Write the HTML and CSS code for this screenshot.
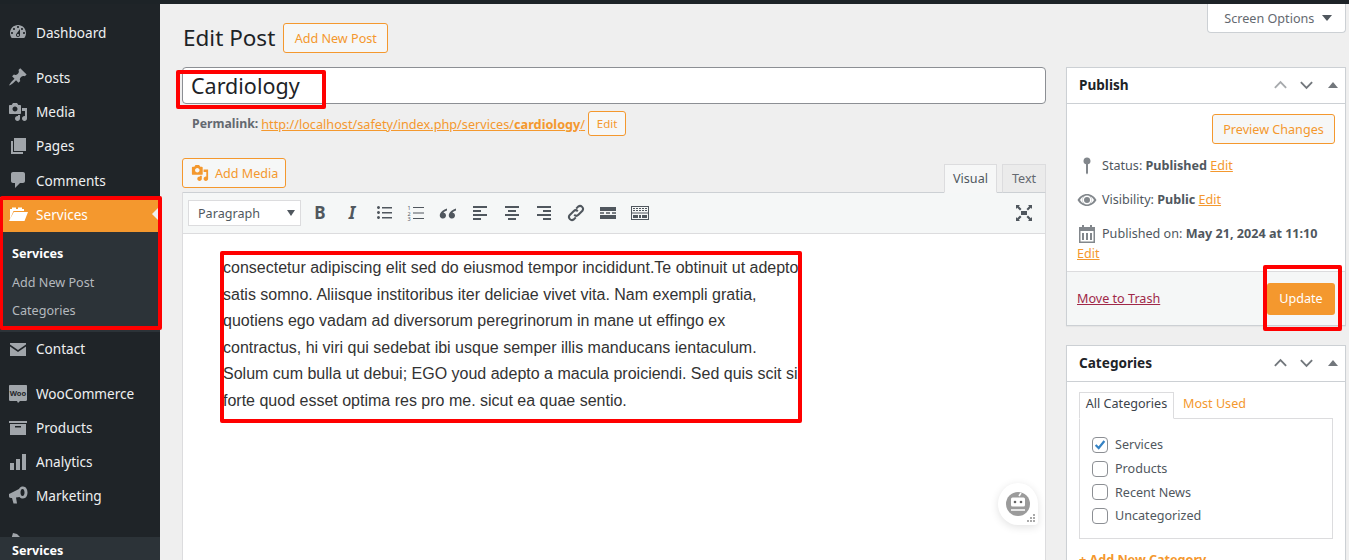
FILE: index.html
```html
<!DOCTYPE html>
<html lang="en">
<head>
<meta charset="utf-8">
<title>Edit Post</title>
<link rel="stylesheet" href="styles.css">
</head>
<body>
<div class="topbar"></div>
<div class="shell">
  <nav class="sidebar">
    <a class="item"><svg class="mi" viewBox="0 0 20 20"><path d="M3.76 16h12.48c1.1-1.37 1.76-3.11 1.76-5 0-4.42-3.58-8-8-8s-8 3.58-8 8c0 1.89.66 3.63 1.76 5zM10 4c.55 0 1 .45 1 1s-.45 1-1 1-1-.45-1-1 .45-1 1-1zM6 6c.55 0 1 .45 1 1s-.45 1-1 1-1-.45-1-1 .45-1 1-1zm8 0c.55 0 1 .45 1 1s-.45 1-1 1-1-.45-1-1 .45-1 1-1zm-5.37 5.55L12 7v6c0 1.1-.9 2-2 2s-2-.9-2-2c0-.57.24-1.08.63-1.45zM4 10c.55 0 1 .45 1 1s-.45 1-1 1-1-.45-1-1 .45-1 1-1zm12 0c.55 0 1 .45 1 1s-.45 1-1 1-1-.45-1-1 .45-1 1-1zm-5 3c0-.55-.45-1-1-1s-1 .45-1 1 .45 1 1 1 1-.45 1-1z" fill-rule="evenodd"/></svg>Dashboard</a>
    <div class="sep"></div>
    <a class="item"><svg class="mi" viewBox="0 0 20 20"><path d="M10.44 3.02l1.82-1.82 6.36 6.35-1.83 1.82c-1.05-.68-2.48-.57-3.41.36l-.75.75c-.92.93-1.04 2.35-.35 3.41l-1.83 1.82-2.41-2.41-2.8 2.79c-.42.42-3.38 2.71-3.8 2.29s1.86-3.39 2.28-3.81l2.79-2.79L4.1 9.36l1.83-1.82c1.05.69 2.48.57 3.4-.36l.75-.75c.93-.92 1.05-2.35.36-3.41z"/></svg>Posts</a>
    <a class="item"><svg class="mi" viewBox="0 0 20 20"><path d="M13 11V4c0-.55-.45-1-1-1h-1.67L9 1H5L3.67 3H2c-.55 0-1 .45-1 1v7c0 .55.45 1 1 1h10c.55 0 1-.45 1-1zM7 4.5c1.38 0 2.5 1.12 2.5 2.5S8.38 9.5 7 9.5 4.5 8.38 4.5 7 5.62 4.5 7 4.5zM14 6h5v10.5c0 1.38-1.12 2.5-2.5 2.5S14 17.88 14 16.5s1.12-2.5 2.5-2.5c.17 0 .34.02.5.05V9h-3V6zm-4 8.05V13h2v3.5c0 1.38-1.12 2.5-2.5 2.5S7 17.88 7 16.5 8.12 14 9.5 14c.17 0 .34.02.5.05z" fill-rule="evenodd"/></svg>Media</a>
    <a class="item"><svg class="mi" viewBox="0 0 20 20"><path d="M6 15V2h12v13H6zM3 5h2v11h10v2H3V5z"/></svg>Pages</a>
    <a class="item"><svg class="mi" viewBox="0 0 20 20"><path d="M5 2h10c1.1 0 2 .9 2 2v7c0 1.1-.9 2-2 2h-3l-5 5v-5H5c-1.1 0-2-.9-2-2V4c0-1.1.9-2 2-2z"/></svg>Comments</a>
    <a class="item active"><svg class="mi" viewBox="0 0 20 20"><path d="M2 5h2V3.500h4V5h2V3.500h4V5h2v2H5.500L2 15zM1 17L5.800 8H20l-3.500 9z"/></svg>Services</a>
    <div class="sub">
      <a class="sub-item current">Services</a>
      <a class="sub-item">Add New Post</a>
      <a class="sub-item">Categories</a>
    </div>
    <div class="lower">
      <a class="item"><svg class="mi" viewBox="0 0 20 20"><path d="M2 4h16v1.500l-8 5.500-8-5.500V4zm0 3.500l8 5.500 8-5.500V17H2V7.500z"/></svg>Contact</a>
      <div class="sep"></div>
      <a class="item"><svg class="mi woo" viewBox="0 0 20 20"><path d="M2 1h16c.8 0 1 .6 1 1.200v13.600c0 .7-.4 1.200-1 1.200h-6l-2 2-1-2H2c-.7 0-1-.5-1-1.200V2.200C1 1.600 1.300 1 2 1z"/><text x="10" y="11.500" class="woo-text">Woo</text></svg>WooCommerce</a>
      <a class="item"><svg class="mi" viewBox="0 0 20 20"><path d="M1 3h18v2H1V3zm1 3h16v11H2V6zm5 2v1.500h6V8H7z" fill-rule="evenodd"/></svg>Products</a>
      <a class="item"><svg class="mi" viewBox="0 0 20 20"><path d="M2 11h4v7H2v-7zm6-4h4v11H8V7zm6-5h4v16h-4V2z"/></svg>Analytics</a>
      <a class="item"><svg class="mi" viewBox="0 0 20 20"><path d="M1 8l10-5c1-2 2.500-2.500 4-2.500 3 0 4.500 3 4.500 6s-1.500 6-4.500 6c-1.500 0-2.500-.5-3.500-1.500L8 11.500l1 6H5.500L4 12H3c-1.500 0-2-1-2-2V8zm13.500-5c-1.500 0-2 2-2 3.500s.5 3.500 2 3.500 2-2 2-3.500-.5-3.500-2-3.500z" fill-rule="evenodd"/></svg>Marketing</a>
      <div class="sep"></div>
      <a class="item"><svg class="mi" viewBox="0 0 20 20"><path d="M5 2l4 1 8 8-6 6-8-8z"/></svg></a>
    </div>
    <div class="status-bar">Services</div>
  </nav>

  <main class="content">
    <button class="screen-options">Screen Options <span class="caret"></span></button>
    <header class="page-head">
      <h1>Edit Post</h1>
      <a class="btn add-new">Add New Post</a>
    </header>
    <div class="columns">
      <section class="left">
        <div class="title-input">Cardiology</div>
        <div class="permalink">
          <strong class="perma-label">Permalink:</strong>
          <a class="link">http://localhost/safety/index.php/services/<b>cardiology</b>/</a>
          <a class="btn small">Edit</a>
        </div>
        <div class="editor-top">
          <a class="btn media-btn"><svg class="bi" viewBox="0 0 20 20"><path d="M13 11V4c0-.55-.45-1-1-1h-1.670L9 1H5L3.670 3H2c-.55 0-1 .45-1 1v7c0 .55.45 1 1 1h10c.55 0 1-.45 1-1zM7 4.500c1.380 0 2.500 1.120 2.500 2.500S8.380 9.500 7 9.500 4.500 8.380 4.500 7 5.620 4.500 7 4.500zM14 6h5v10.500c0 1.380-1.120 2.500-2.500 2.500S14 17.880 14 16.500s1.120-2.500 2.500-2.500c.17 0 .34.020.5.050V9h-3V6zm-4 8.050V13h2v3.500c0 1.380-1.120 2.500-2.500 2.500S7 17.880 7 16.500 8.120 14 9.500 14c.17 0 .34.020.5.050z" fill-rule="evenodd"/></svg>Add Media</a>
          <div class="tabs">
            <span class="tab on">Visual</span>
            <span class="tab">Text</span>
          </div>
        </div>
        <div class="editor">
          <div class="toolbar">
            <div class="format">Paragraph<span class="format-caret"></span></div>
            <span class="tool tb">B</span>
            <span class="tool ti">I</span>
            <svg class="tool-svg" viewBox="0 0 20 20"><path d="M3 4.500a1.500 1.500 0 1 1 0 .01zM8 4h10v1.500H8zM3 9.500a1.500 1.500 0 1 1 0 .01zM8 9h10v1.500H8zM3 14.500a1.500 1.500 0 1 1 0 .01zM8 14h10v1.500H8z"/></svg>
            <svg class="tool-svg" viewBox="0 0 20 20"><path d="M7 4h11v1H7zM7 9.500h11v1H7zM7 15h11v1H7z"/><text x="1.500" y="7" class="num">1</text><text x="1.500" y="12.500" class="num">2</text><text x="1.500" y="18" class="num">3</text></svg>
            <svg class="tool-svg" viewBox="0 0 20 20"><path d="M9 5.500C5.500 6.500 3 8.500 2 11c-.6 1.800 0 4.500 3 4.500 2 0 3-1.500 3-3s-1-2.700-2.500-2.700c.5-1 1.800-1.900 3.500-2.300zM18 5.500c-3.500 1-6 3-7 5.500-.6 1.800 0 4.500 3 4.500 2 0 3-1.500 3-3s-1-2.700-2.500-2.700c.5-1 1.800-1.900 3.500-2.300z"/></svg>
            <svg class="tool-svg" viewBox="0 0 20 20"><path d="M3 3h14v2H3zM3 7h8v2H3zM3 11h14v2H3zM3 15h8v2H3z"/></svg>
            <svg class="tool-svg" viewBox="0 0 20 20"><path d="M3 3h14v2H3zM6 7h8v2H6zM3 11h14v2H3zM6 15h8v2H6z"/></svg>
            <svg class="tool-svg" viewBox="0 0 20 20"><path d="M3 3h14v2H3zM9 7h8v2H9zM3 11h14v2H3zM9 15h8v2H9z"/></svg>
            <svg class="tool-svg" viewBox="0 0 20 20"><path d="M11.800 8.200a3 3 0 0 0-4.200 0l-4 4a3 3 0 0 0 4.200 4.200l2-2M8.200 11.800a3 3 0 0 0 4.200 0l4-4a3 3 0 0 0-4.200-4.200l-2 2" class="stroke"/></svg>
            <svg class="tool-svg" viewBox="0 0 20 20"><path d="M2 4h16v4H2zM2 12h16v4H2zM2 9.300h4v1.400H2zM8 9.300h4v1.400H8zM14 9.300h4v1.400h-4z"/></svg>
            <svg class="tool-svg" viewBox="0 0 20 20"><path d="M1 3h18v14H1V3zm1 1v5.500h16V4H2zm0 6.500V16h16v-5.500H2zM3 5h2v1H3zM6 5h2v1H6zM9 5h2v1H9zM12 5h2v1h-2zM15 5h2v1h-2zM3 7h2v1H3zM6 7h2v1H6zM9 7h2v1H9zM12 7h2v1h-2zM15 7h2v1h-2zM3 12h5v3H3zM9 12h2v3H9zM12 12h5v3h-5z" fill-rule="evenodd"/></svg>
            <svg class="tool-svg expand" viewBox="0 0 20 20"><path d="M7 8h6v4H7zM2 2h4L4.800 3.200 7.500 6 6 7.500 3.200 4.800 2 6zM18 2v4l-1.200-1.200L14 7.500 12.500 6l2.700-2.800L14 2zM2 18v-4l1.200 1.200L6 12.500 7.500 14l-2.700 2.800L6 18zM18 18h-4l1.200-1.200L12.500 14l1.500-1.500 2.800 2.700L18 14z"/></svg>
          </div>
          <div class="editor-body">
            <p>consectetur adipiscing elit sed do eiusmod tempor incididunt.Te obtinuit ut adepto satis somno. Aliisque institoribus iter deliciae vivet vita. Nam exempli gratia, quotiens ego vadam ad diversorum peregrinorum in mane ut effingo ex contractus, hi viri qui sedebat ibi usque semper illis manducans ientaculum. Solum cum bulla ut debui; EGO youd adepto a macula proiciendi. Sed quis scit si forte quod esset optima res pro me. sicut ea quae sentio.</p>
            <div class="bot">
              <svg viewBox="0 0 40 42"><circle cx="20" cy="21" r="12" class="bot-face"/><path d="M21 13l2-3" class="bot-line"/><rect x="13" y="14.500" width="14" height="9" rx="1.500" class="bot-eyes"/><circle cx="17" cy="19" r="1.300" class="bot-dot"/><circle cx="23" cy="19" r="1.300" class="bot-dot"/><path d="M13 27h14" class="bot-line"/><path d="M32 37h2v2h-2zM35 37h2v2h-2zM35 34h2v2h-2zM29 37h2v2h-2zM32 34h2v2h-2zM35 31h2v2h-2z" class="bot-grip"/></svg>
            </div>
          </div>
        </div>
      </section>

      <aside class="right">
        <section class="box publish">
          <header class="box-head">
            <h2>Publish</h2>
            <div class="box-tools">
              <svg class="chev faded" viewBox="0 0 16 10"><path d="M2 8l6-6 6 6"/></svg>
              <svg class="chev" viewBox="0 0 16 10"><path d="M2 2l6 6 6-6"/></svg>
              <span class="tri"></span>
            </div>
          </header>
          <div class="publish-body">
            <div class="preview-row"><a class="btn preview">Preview Changes</a></div>
            <div class="meta"><svg class="meta-i" viewBox="0 0 20 20"><path d="M10 1.500a3.500 3.500 0 0 1 1 6.850V17l-1 1.500L9 17V8.350A3.500 3.500 0 0 1 10 1.500z"/></svg><span>Status: <b>Published</b> <a class="link">Edit</a></span></div>
            <div class="meta"><svg class="meta-i" viewBox="0 0 20 20"><path d="M10 4c4 0 7.500 2.500 9.500 6-2 3.500-5.500 6-9.500 6s-7.500-2.500-9.500-6c2-3.500 5.500-6 9.500-6zm0 1.500a4.500 4.500 0 1 0 0 9 4.500 4.500 0 0 0 0-9zM10 7a3 3 0 1 1 0 6 3 3 0 0 1 0-6zM3 10c1.100 1.700 2.200 2.900 3.700 3.800C5.800 12.800 5.300 11.500 5.300 10s.5-2.800 1.400-3.800C5.200 7.100 4.100 8.300 3 10zm14 0c-1.100-1.700-2.200-2.900-3.700-3.800.9 1 1.400 2.300 1.400 3.800s-.5 2.800-1.400 3.800c1.500-.9 2.600-2.100 3.700-3.800z" fill-rule="evenodd"/></svg><span>Visibility: <b>Public</b> <a class="link">Edit</a></span></div>
            <div class="meta date"><svg class="meta-i" viewBox="0 0 20 20"><path d="M5 1h2v2h6V1h2v2h3v16H2V3h3V1zM3.500 7v10.500h13V7h-13zM5 9h2v7H5zM9 9h2v7H9zM13 9h2v7h-2z" fill-rule="evenodd"/></svg><span>Published on: <b>May 21, 2024 at 11:10</b> <a class="link">Edit</a></span></div>
          </div>
          <footer class="publish-foot">
            <a class="trash">Move to Trash</a>
            <a class="update">Update</a>
          </footer>
        </section>

        <section class="box categories">
          <header class="box-head">
            <h2>Categories</h2>
            <div class="box-tools">
              <svg class="chev" viewBox="0 0 16 10"><path d="M2 8l6-6 6 6"/></svg>
              <svg class="chev" viewBox="0 0 16 10"><path d="M2 2l6 6 6-6"/></svg>
              <span class="tri"></span>
            </div>
          </header>
          <div class="cat-body">
            <div class="cat-tabs"><span class="cat-tab on">All Categories</span><a class="cat-tab-link">Most Used</a></div>
            <ul class="cat-list">
              <li><span class="check on"><svg viewBox="0 0 16 16"><path d="M3 8l3.500 3.500L13 3.500"/></svg></span>Services</li>
              <li><span class="check"></span>Products</li>
              <li><span class="check"></span>Recent News</li>
              <li><span class="check"></span>Uncategorized</li>
            </ul>
            <a class="add-cat">+ Add New Category</a>
          </div>
        </section>
      </aside>
    </div>
  </main>
</div>
<div class="mark mark-title"></div>
<div class="mark mark-menu"></div>
<div class="mark mark-text"></div>
<div class="mark mark-update"></div>
</body>
</html>
```
FILE: styles.css
```css
* { box-sizing: border-box; }
html, body { margin: 0; height: 560px; overflow: hidden; }
body { background: #efefef; font-family: "Noto Sans", "Open Sans", sans-serif; font-size: 13px; color: #444; position: relative; }
a { color: inherit; text-decoration: none; }
.topbar { height: 4px; background: #1d2327; }
.shell { display: flex; height: 556px; }

.sidebar { width: 160px; flex: none; background: #1f2428; position: relative; overflow: hidden; padding-top: 11px; }
.item { display: flex; align-items: center; height: 34.250px; padding-left: 8px; font-size: 13.600px; color: #eef0f1; gap: 8px; }
.lower .item { height: 34px; }
.mi { width: 20px; height: 20px; fill: #a0a5aa; flex: none; }
.sep { height: 11px; }
.active { background: #f4982e; color: #fff; position: relative; }
.active .mi { fill: #fff; }
.active::after { content: ""; position: absolute; right: 2px; top: 50%; margin-top: -6px; border: 6px solid transparent; border-right-color: #efefef; border-left-width: 0; }
.sub { background: #2c3338; height: 100px; padding-top: 8px; }
.sub-item { display: flex; align-items: center; height: 28.500px; padding-left: 12px; font-size: 12.600px; color: #b4b9be; }
.current { color: #fff; font-weight: 700; }
.woo-text { font: 700 7.500px "Noto Sans", sans-serif; fill: #1f2428; text-anchor: middle; }
.status-bar { position: absolute; left: 0; right: 0; top: 533px; height: 24px; background: #2c3338; color: #fff; font-weight: 700; font-size: 12.600px; padding: 5px 12px 0; }

.content { flex: 1; padding: 19px 3px 0 22px; position: relative; min-width: 0; }
.screen-options { position: absolute; top: 0; right: 3px; width: 139px; height: 29px; background: #fff; border: 1px solid #ccd0d4; border-top: 0; border-radius: 0 0 4px 4px; font: 12.600px "Noto Sans", sans-serif; color: #646970; padding: 0 0 0 3px; }
.caret { display: inline-block; margin-left: 4px; border: 5px solid transparent; border-top: 6px solid #50575e; border-bottom: 0; vertical-align: 2px; }

.page-head { display: flex; align-items: center; gap: 8px; height: 30px; margin-bottom: 14px; }
h1 { margin: -2px 0 0 1px; font-size: 22.500px; font-weight: 400; color: #1d2327; }
.btn { display: inline-flex; align-items: center; justify-content: center; border: 1px solid #f4982e; border-radius: 3px; color: #f4982e; background: #f6f7f7; font-size: 12.600px; }
.add-new { width: 105px; height: 30px; }

.columns { display: flex; gap: 20px; align-items: flex-start; }
.left { width: 864px; flex: none; }
.right { width: 280px; flex: none; }

.title-input { height: 37px; background: #fff; border: 1px solid #8c8f94; border-radius: 4px; padding-left: 8px; font-size: 21.500px; line-height: 35px; color: #1d2327; }
.permalink { display: flex; align-items: center; height: 25px; margin-top: 7px; padding-left: 10px; gap: 3px; font-size: 12.700px; color: #646970; }
.perma-label { font-size: 12.300px; }
.link { color: #f4982e; text-decoration: underline; }
.small { width: 38px; height: 25px; font-size: 11.500px; background: #f6f7f7; }

.editor-top { display: flex; justify-content: space-between; align-items: flex-end; height: 34px; margin-top: 22px; }
.media-btn { width: 104px; height: 30px; gap: 6px; justify-content: flex-start; padding-left: 8px; align-self: flex-start; }
.bi { width: 18px; height: 18px; fill: #f4982e; }
.tabs { display: flex; gap: 5px; height: 29px; margin-bottom: -1px; position: relative; }
.tab { display: flex; align-items: center; justify-content: center; border: 1px solid #dcdcde; border-bottom: 1px solid #ccd0d4; font-size: 12.600px; background: #ebebeb; color: #646970; width: 44px; }
.tab.on { width: 53px; background: #f6f7f7; border-bottom-color: #f6f7f7; color: #50575e; position: relative; z-index: 1; }

.editor { border: 1px solid #dcdcde; border-bottom: 0; background: #fff; }
.toolbar { display: flex; align-items: center; height: 42px; background: #f5f7f7; border-bottom: 1px solid #dcdcde; padding-left: 5px; border-top: 1px solid #ccd0d4; margin-top: -1px; }
.format { display: flex; align-items: center; justify-content: space-between; width: 113px; height: 26px; padding: 0 5px 0 9px; background: #fff; border: 1px solid #dcdcde; font-size: 12.600px; color: #50575e; margin-right: 9px; }
.format-caret { border: 4px solid transparent; border-top: 6px solid #50575e; border-bottom: 0; }
.tool { width: 20px; height: 20px; margin-right: 12px; text-align: center; line-height: 20px; color: #50575e; }
.tb { font: 700 17px/20px "Noto Sans", sans-serif; }
.ti { font: italic 700 17px/20px "Noto Sans", sans-serif; }
.tool-svg { width: 20px; height: 20px; margin-right: 12px; fill: #50575e; flex: none; }
.stroke { fill: none; stroke: #50575e; stroke-width: 2; }
.num { font: 5.500px "Noto Sans", sans-serif; }
.expand { margin: 0 11px 0 auto; }
.editor-body { height: 340px; position: relative; padding: 21px 40px; }
.editor-body p { margin: 0; width: 580px; font: 16px/26.500px "Liberation Sans", Arial, sans-serif; color: #333; }
.bot { position: absolute; left: 815px; top: 249px; width: 40px; height: 42px; background: #fff; border-radius: 50% 50% 4px 50%; box-shadow: 0 2px 8px rgba(0,0,0,.12); }
.bot svg { display: block; width: 40px; height: 42px; }
.bot-face { fill: #9b9b9b; }
.bot-eyes { fill: #fff; }
.bot-dot { fill: #666; }
.bot-line { stroke: #fff; stroke-width: 1.500; fill: none; }
.bot-grip { fill: #aaa; }

.box { background: #fff; border: 1px solid #ccd0d4; box-shadow: 0 1px 1px rgba(0,0,0,.04); }
.publish { height: 259px; display: flex; flex-direction: column; }
.categories { margin-top: 19px; height: 300px; }
.box-head { display: flex; align-items: center; justify-content: space-between; height: 36px; border-bottom: 1px solid #ccd0d4; padding: 0 6px 2px 12px; flex: none; }
h2 { margin: 0; font-size: 13.600px; font-weight: 700; color: #1d2327; }
.box-tools { display: flex; align-items: center; gap: 11px; }
.chev { width: 15px; height: 10px; fill: none; stroke: #72777c; stroke-width: 2; }
.chev.faded { stroke: #a7aaad; }
.tri { border: 5px solid transparent; border-bottom: 6px solid #72777c; border-top: 0; margin-left: 3px; margin-right: 1px; }

.publish-body { flex: 1; padding: 10px 10px 0 10px; }
.preview-row { display: flex; justify-content: flex-end; margin-bottom: 2px; }
.preview { width: 123px; height: 30px; }
.meta { display: flex; gap: 5px; height: 34px; padding-top: 10px; font-size: 12.600px; color: #50575e; line-height: 20px; align-items: flex-start; }
.meta-i { width: 20px; height: 20px; fill: #82878c; flex: none; }
.meta span { flex: 1; }
.date { display: block; height: auto; line-height: 20px; padding-top: 10px; }
.date .meta-i { float: left; margin-right: 5px; }
.date .link { display: block; }
.publish-foot { height: 54px; display: flex; align-items: center; justify-content: space-between; background: #f5f7f7; border-top: 1px solid #dcdcde; padding: 0 10px; flex: none; }
.trash { color: #a02848; font-size: 12.600px; text-decoration: underline; }
.update { display: flex; align-items: center; justify-content: center; width: 68px; height: 32px; background: #f4982e; color: #fff; border-radius: 3px; font-size: 12.600px; }

.cat-body { padding: 10px 12px; }
.cat-tabs { display: flex; height: 27px; margin-bottom: -1px; position: relative; }
.cat-tab { display: flex; align-items: center; justify-content: center; width: 95px; padding-bottom: 5px; border: 1px solid #dcdcde; border-bottom-color: #fff; font-size: 12.600px; color: #3c434a; background: #fff; }
.cat-tab-link { display: flex; align-items: center; margin-left: 9px; padding-bottom: 5px; color: #f4982e; font-size: 12.600px; }
.cat-list { list-style: none; margin: 0; padding: 14px 12px 0; height: 121px; border: 1px solid #dcdcde; }
.cat-list li { display: flex; align-items: center; gap: 7px; height: 23.700px; font-size: 12.600px; color: #50575e; }
.check { width: 16px; height: 16px; background: #fff; border: 1px solid #8c8f94; border-radius: 4px; flex: none; }
.check svg { display: block; width: 14px; height: 14px; fill: none; stroke: #3582c4; stroke-width: 2.500; }
.add-cat { display: block; margin-top: 12px; color: #f4982e; font-weight: 700; font-size: 12.600px; text-decoration: underline; }

.mark { position: absolute; border: 4px solid #f00; border-radius: 2px; pointer-events: none; }
.mark-title { left: 176px; top: 70px; width: 150px; height: 39px; }
.mark-menu { left: 0; top: 196px; width: 162px; height: 134px; border-left-width: 3px; }
.mark-text { left: 220px; top: 251px; width: 582px; height: 172px; }
.mark-update { left: 1263px; top: 265px; width: 79px; height: 66px; }
```
